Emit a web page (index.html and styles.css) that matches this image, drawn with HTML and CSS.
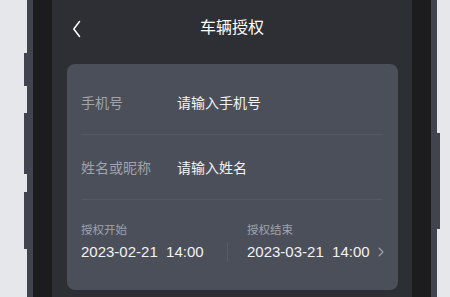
FILE: index.html
```html
<!DOCTYPE html>
<html lang="zh">
<head>
<meta charset="utf-8">
<link rel="stylesheet" href="styles.css">
</head>
<body>
<div class="stage">
  <div class="phone">
    <span class="btn btn-l1"></span>
    <span class="btn btn-l2"></span>
    <span class="btn btn-l3"></span>
    <span class="btn btn-r1"></span>
    <div class="bezel">
      <div class="screen">
        <div class="nav">
          <svg class="back" width="9" height="18" viewBox="0 0 9 18"><path d="M7.5 1.5 L1.8 9 L7.5 16.5" fill="none" stroke="#ffffff" stroke-width="1.5" stroke-linecap="round" stroke-linejoin="round"/></svg>
          <div class="title">车辆授权</div>
        </div>
        <div class="card">
          <div class="row">
            <div class="label">手机号</div>
            <div class="value">请输入手机号</div>
          </div>
          <div class="row">
            <div class="label">姓名或昵称</div>
            <div class="value">请输入姓名</div>
          </div>
          <div class="time-row">
            <div class="col col-start">
              <div class="small">授权开始</div>
              <div class="date">2023-02-21&nbsp;&nbsp;14:00</div>
            </div>
            <div class="sep"></div>
            <div class="col col-end">
              <div class="small">授权结束</div>
              <div class="date-line">
                <div class="date">2023-03-21&nbsp;&nbsp;14:00</div>
                <svg class="arrow" width="6" height="10" viewBox="0 0 6 10"><path d="M1 1 L5 5 L1 9" fill="none" stroke="#9ea1a9" stroke-width="1.1" stroke-linecap="round" stroke-linejoin="round"/></svg>
              </div>
            </div>
          </div>
        </div>
      </div>
    </div>
  </div>
</div>
</body>
</html>
```

FILE: styles.css
```css
html, body {
  margin: 0;
  padding: 0;
  background: #e6e7ea;
  overflow: hidden;
  width: 450px;
  height: 297px;
}

.stage {
  padding-left: 27px;
  width: 410px;
}

.phone {
  position: relative;
  width: 398px;
  height: 297px;
  background: #41444e;
  padding: 0 6px;
}

.btn {
  position: absolute;
  width: 3px;
  background: #41444e;
}
.btn-l1 { left: -3px; top: 53px; height: 33px; }
.btn-l2 { left: -3px; top: 113px; height: 61px; }
.btn-l3 { left: -3px; top: 192px; height: 57px; }
.btn-r1 { right: -3px; top: 133px; height: 96px; }

.bezel {
  background: #1c1c1f;
  padding: 0 19px;
  height: 297px;
}

.screen {
  background: #2e2f34;
  width: 360px;
  height: 297px;
  overflow: hidden;
  font-family: "Liberation Sans", "Noto Sans CJK SC", sans-serif;
}

.nav {
  position: relative;
  height: 52px;
  display: flex;
  align-items: center;
  justify-content: center;
}

.back {
  position: absolute;
  left: 20px;
  top: 20px;
}

.title {
  color: #ffffff;
  font-size: 16px;
  font-family: "Noto Sans CJK SC", sans-serif;
}

.card {
  margin: 12px 14px 0 15px;
  background: #4b4f5a;
  border-radius: 8px;
  padding: 6px 15px 28px 14px;
}

.row {
  height: 64px;
  display: flex;
  align-items: center;
  border-bottom: 1px solid #555964;
  font-family: "Noto Sans CJK SC", sans-serif;
  font-size: 14px;
}

.label {
  width: 96px;
  color: #a0a3ab;
}

.value {
  color: #f2f2f4;
}

.time-row {
  display: flex;
  align-items: flex-end;
  padding-top: 22px;
}

.col-start {
  width: 146px;
}

.col-end {
  flex: 1;
  padding-left: 19px;
}

.small {
  font-family: "Noto Sans CJK SC", sans-serif;
  font-size: 11.5px;
  line-height: 14px;
  color: #a0a3ab;
  margin-bottom: 6px;
}

.date {
  font-size: 15px;
  line-height: 20px;
  color: #f2f2f4;
  white-space: nowrap;
}

.date-line {
  display: flex;
  align-items: center;
  justify-content: space-between;
}

.arrow {
  display: block;
  margin-right: -1px;
}

.sep {
  width: 1px;
  height: 18px;
  margin-bottom: 1px;
  background: #585c66;
}
```
